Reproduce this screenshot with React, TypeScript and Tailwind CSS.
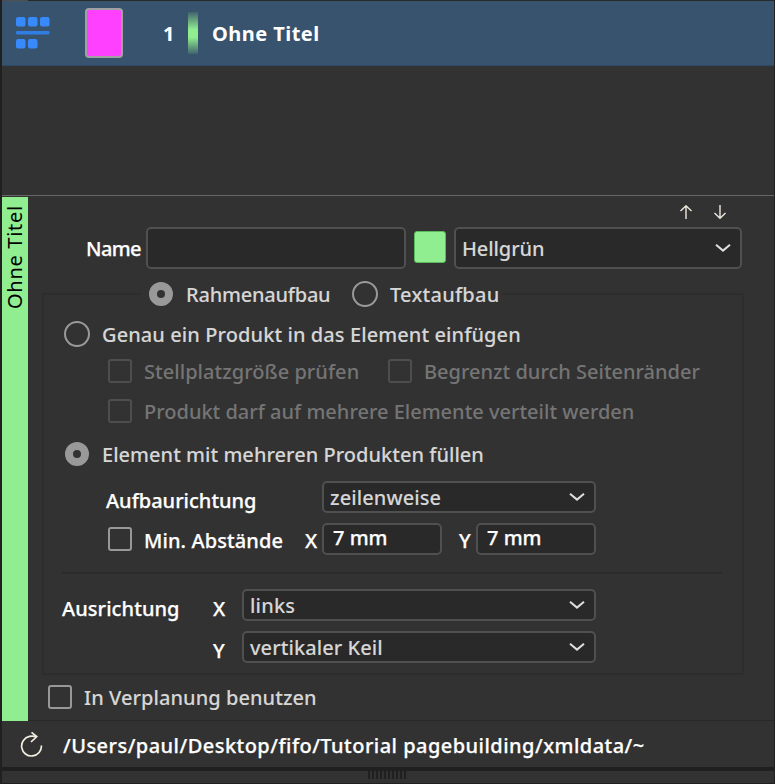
import React, { useState } from 'react';
import clsx from 'clsx';

interface RadioProps {
  checked: boolean;
  onSelect: () => void;
}

function Radio({ checked, onSelect }: RadioProps) {
  return (
    <button
      type="button"
      role="radio"
      aria-checked={checked}
      onClick={onSelect}
      className={clsx(
        'shrink-0 rounded-full',
        checked ? 'mx-px size-6 border-8 border-[#999999]' : 'size-[26px] border-2 border-[#999999]'
      )}
    />
  );
}

interface CheckProps {
  disabled?: boolean;
}

function Check({ disabled }: CheckProps) {
  return (
    <span
      className={clsx(
        'size-6 shrink-0 rounded-[3px] border-2',
        disabled ? 'border-[#4e4e4e]' : 'border-[#989898]'
      )}
    />
  );
}

interface SelectProps {
  value: string;
  className: string;
  textClass: string;
}

function Select({ value, className, textClass }: SelectProps) {
  return (
    <div
      className={clsx(
        'flex shrink-0 items-center justify-between rounded-[5px] border-2 border-[#505050] bg-[#292929] pl-[6px] text-[#d6d6d6] [-webkit-text-stroke:0.1px]',
        className
      )}
    >
      <span className={clsx('mt-[2px]', textClass)}>{value}</span>
      <svg width="16" height="9" viewBox="0 0 16 9" className="mr-[9px]" fill="none" stroke="#dedede" strokeWidth="2">
        <path d="M1 .8 8 6.6l7-5.8" />
      </svg>
    </div>
  );
}

const inputClass =
  'h-8 w-[120px] shrink-0 rounded-[5px] border-2 border-[#505050] bg-[#292929] pb-[3px] pl-[9px] text-white outline-none';

export default function App() {
  const [structure, setStructure] = useState('frame');
  const [mode, setMode] = useState('fill');
  const [minX, setMinX] = useState('7 mm');
  const [minY, setMinY] = useState('7 mm');

  return (
    <div className="flex h-[784px] w-[775px] flex-col overflow-hidden border-r border-l-2 border-r-[#222222] border-l-[#202020] bg-[#323232] font-['Noto_Sans','Liberation_Sans',sans-serif] text-[20px] leading-6 font-medium whitespace-nowrap text-white [-webkit-text-stroke:0.25px]">
      {/* selected list entry */}
      <div className="flex h-px shrink-0 bg-[#292929]">
        <div className="w-[26px] bg-[#505050]" />
      </div>
      <div className="flex h-[65px] shrink-0 items-center border-b border-[#2e4a64] bg-[#38536d] [-webkit-text-stroke:0px]">
        <svg width="34" height="32" viewBox="0 0 34 32" className="ml-[14px]" fill="#3889fa">
          <rect x="0" y="0" width="9.5" height="9.5" rx="2" />
          <rect x="12" y="0" width="9.5" height="9.5" rx="2" />
          <rect x="24" y="0" width="9.5" height="9.5" rx="2" />
          <rect x="0" y="14" width="33.5" height="3.5" rx="1" fill="#307ee4" />
          <rect x="0" y="22" width="9.5" height="9.5" rx="2" />
          <rect x="12" y="22" width="9.5" height="9.5" rx="2" />
        </svg>
        <div className="ml-[35px] h-[50px] w-[38px] rounded-[4px] border-2 border-[#a1a1a1] bg-[#ff40ff]" />
        <span className="mt-[2px] ml-[40px] w-[25px] font-bold">1</span>
        <div className="h-[42px] w-[10px] bg-[linear-gradient(#41636e,#90ee90_42%,#90ee90_60%,#41636e)]" />
        <span className="mt-[2px] ml-[14px] font-bold tracking-[0.45px]">Ohne Titel</span>
      </div>
      <div className="h-[130px] shrink-0 border-b border-[#666666]" />

      <div className="flex h-[525px] shrink-0 pt-px">
        <div className="flex w-[26px] shrink-0 justify-center bg-[#90ee90] pt-[8px] [-webkit-text-stroke:0px]">
          <span className="h-[104px] rotate-180 leading-[26px] font-normal tracking-[0.7px] text-black [writing-mode:vertical-rl]">
            Ohne Titel
          </span>
        </div>

        <div className="flex flex-1 flex-col border-b border-[#292929]">
          <div className="flex h-[30px] shrink-0 justify-end gap-[20px] pt-[8px] pr-[47px]">
            <svg width="14" height="15" viewBox="0 0 14 15" fill="none" stroke="#eee9dc" strokeWidth="1.4">
              <path d="M7 14V.8M1.5 6 7 .8 12.5 6" />
            </svg>
            <svg width="14" height="15" viewBox="0 0 14 15" fill="none" stroke="#eee9dc" strokeWidth="1.4">
              <path d="M7 0v13.2M1.5 8 7 13.2 12.5 8" />
            </svg>
          </div>

          <div className="flex h-[42px] shrink-0 items-center">
            <span className="mt-[2px] ml-[58px] w-[60px] tracking-[-0.6px]">Name</span>
            <input className="h-[42px] w-[260px] rounded-[5px] border-2 border-[#505050] bg-[#292929] px-2 outline-none" />
            <div className="mb-[2px] ml-2 size-8 rounded-[3px] border border-[#5cb85c] bg-[#90ee90]" />
            <Select value="Hellgrün" className="ml-2 h-[42px] w-[288px]" textClass="tracking-[-0.1px]" />
          </div>

          <fieldset className="mt-[11px] ml-[14px] h-[395px] w-[702px] shrink-0 border-2 border-[#2d2d2d]">
            <legend className="ml-[98px] flex h-[28px] items-center pl-[6px] text-[#d6d6d6] [-webkit-text-stroke:0.1px]">
              <Radio checked={structure === 'frame'} onSelect={() => setStructure('frame')} />
              <span className="mt-[2px] ml-[12px] w-[166px] tracking-[-0.22px]">Rahmenaufbau</span>
              <Radio checked={structure === 'text'} onSelect={() => setStructure('text')} />
              <span className="mt-[2px] ml-[12px] w-[113px] tracking-[0.25px]">Textaufbau</span>
            </legend>

            <div className="mt-[12px] flex h-[28px] items-center pl-[20px] text-[#d6d6d6] [-webkit-text-stroke:0.1px]">
              <Radio checked={mode === 'single'} onSelect={() => setMode('single')} />
              <span className="mt-[2px] ml-[12px] tracking-[0.09px]">Genau ein Produkt in das Element einfügen</span>
            </div>
            <div className="mt-[9px] flex h-[28px] items-center pl-[64px] text-[#757575] [-webkit-text-stroke:0px]">
              <Check disabled />
              <span className="mt-[2px] ml-[12px] w-[244px] tracking-[0.04px]">Stellplatzgröße prüfen</span>
              <Check disabled />
              <span className="mt-[2px] ml-[12px]">Begrenzt durch Seitenränder</span>
            </div>
            <div className="mt-[12px] flex h-[28px] items-center pl-[64px] text-[#757575] [-webkit-text-stroke:0px]">
              <Check disabled />
              <span className="mt-[2px] ml-[12px]">Produkt darf auf mehrere Elemente verteilt werden</span>
            </div>
            <div className="mt-[15px] flex h-[28px] items-center pl-[20px] text-[#d6d6d6] [-webkit-text-stroke:0.1px]">
              <Radio checked={mode === 'fill'} onSelect={() => setMode('fill')} />
              <span className="mt-[2px] ml-[12px] tracking-[0.03px]">Element mit mehreren Produkten füllen</span>
            </div>

            <div className="mt-[13px] flex h-8 items-center pl-[62px]">
              <span className="mt-[8px] w-[216px]">Aufbaurichtung</span>
              <Select value="zeilenweise" className="h-8 w-[274px]" textClass="tracking-[0.1px]" />
            </div>
            <div className="mt-[10px] flex h-8 items-center pl-[64px]">
              <Check />
              <span className="mt-[4px] ml-[12px] w-[161px] tracking-[0.1px]">Min. Abstände</span>
              <span className="mt-[4px] w-[17px]">X</span>
              <input value={minX} onChange={(e) => setMinX(e.target.value)} className={inputClass} />
              <span className="mt-[4px] ml-[17px] w-[17px]">Y</span>
              <input value={minY} onChange={(e) => setMinY(e.target.value)} className={inputClass} />
            </div>

            <div className="mt-[17px] ml-[18px] h-[2px] w-[660px] bg-[#2b2b2b]" />

            <div className="mt-[15px] flex h-8 items-center pl-[18px]">
              <span className="mt-[8px] w-[151px] tracking-[0.08px]">Ausrichtung</span>
              <span className="mt-[8px] w-[29px]">X</span>
              <Select value="links" className="h-8 w-[354px]" textClass="tracking-[0.2px]" />
            </div>
            <div className="mt-[10px] flex h-8 items-center pl-[169px]">
              <span className="mt-[8px] w-[29px]">Y</span>
              <Select value="vertikaler Keil" className="h-8 w-[354px]" textClass="tracking-[0.08px]" />
            </div>
          </fieldset>

          <div className="mt-[9px] flex h-[26px] items-center pl-[20px] text-[#d6d6d6] [-webkit-text-stroke:0.1px]">
            <Check />
            <span className="mt-[2px] ml-[12px] tracking-[0.06px]">In Verplanung benutzen</span>
          </div>
        </div>
      </div>

      {/* data source path */}
      <div className="flex h-[46px] shrink-0 items-center">
        <svg width="24" height="26" viewBox="0 0 24 26" className="ml-[18px]" fill="none" stroke="#f2eddf" strokeWidth="1.7">
          <path d="M21.4 14.5A9.9 9.9 0 1 1 9.5 5.4q3-.6 7 .2" />
          <path d="M11.5 1.4 16.7 5.6 11 11" />
        </svg>
        <span className="mt-[4px] ml-[19px] tracking-[0.47px]">/Users/paul/Desktop/fifo/Tutorial pagebuilding/xmldata/~</span>
      </div>
      <div className="h-[4px] shrink-0 bg-[#202020]" />
      <div className="flex flex-1 items-start border-b border-[#202020] pl-[366px]">
        <div className="h-[8px] w-[38px] bg-[repeating-linear-gradient(to_right,#202020_0px,#202020_2px,transparent_2px,transparent_4px)]" />
      </div>
    </div>
  );
}
